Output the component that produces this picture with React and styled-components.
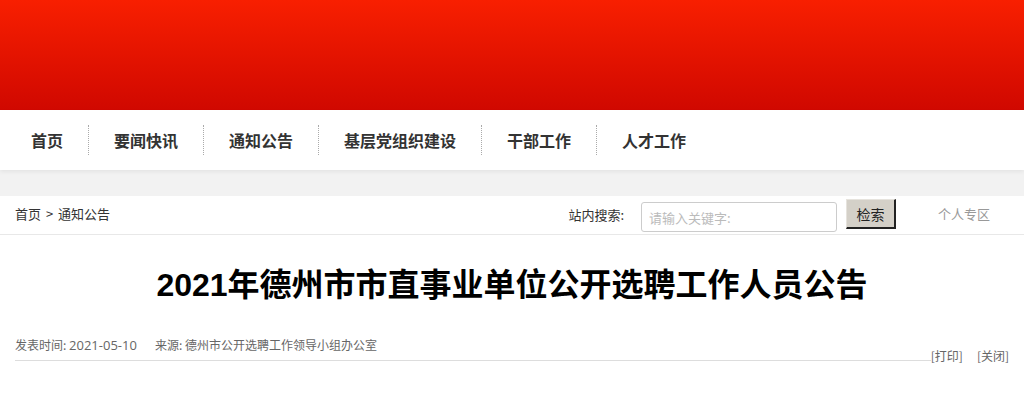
import React from "react";
import styled, { createGlobalStyle } from "styled-components";

const GlobalStyle = createGlobalStyle`
  body {
    margin: 0;
    background: #fff;
    font-family: "Noto Sans CJK SC", "Noto Sans", sans-serif;
    color: #333;
  }
`;

const navItems = ["首页", "要闻快讯", "通知公告", "基层党组织建设", "干部工作", "人才工作"];

const App = () => {
  return (
    <>
      <GlobalStyle />
      <Banner />
      <Nav>
        {navItems.map((item, i) => (
          <NavItem key={item} last={i === navItems.length - 1}>
            {item}
          </NavItem>
        ))}
      </Nav>
      <Band />
      <LocationBar>
        <Crumbs>首页 &gt; 通知公告</Crumbs>
        <Search>
          <SearchLabel>站内搜索:</SearchLabel>
          <SearchInput placeholder="请输入关键字:" />
          <SearchButton>检索</SearchButton>
        </Search>
        <Personal>个人专区</Personal>
      </LocationBar>
      <Article>
        <Title>2021年德州市市直事业单位公开选聘工作人员公告</Title>
        <MetaRow>
          <Meta>
            <span>
              发表时间: <Latin>2021-05-10</Latin>
            </span>
            <span>来源: 德州市公开选聘工作领导小组办公室</span>
          </Meta>
          <Tools>
            <span>[打印]</span>
            <span>[关闭]</span>
          </Tools>
        </MetaRow>
      </Article>
    </>
  );
};

export default App;

const Banner = styled.div`
  height: 110px;
  background: linear-gradient(to bottom, #f81f00, #d00800);
`;

const Nav = styled.ul`
  display: flex;
  align-items: center;
  height: 60px;
  margin: 0;
  padding: 0 0 0 6px;
  list-style: none;
  background: #fff;
  box-shadow: 0 2px 4px rgba(0, 0, 0, 0.06);
  position: relative;
`;

const NavItem = styled.li`
  padding: 0 25px;
  height: 30px;
  line-height: 30px;
  font-size: 16px;
  font-weight: bold;
  color: #333;
  border-right: ${(p) => (p.last ? "none" : "1px dotted #aaa")};
`;

const Band = styled.div`
  height: 26px;
  background: #f2f2f2;
`;

const LocationBar = styled.div`
  display: flex;
  align-items: center;
  height: 38px;
  padding: 0 15px;
  border-bottom: 1px solid #e8e8e8;
  font-size: 13px;
`;

const Crumbs = styled.div`
  flex: 1;
  color: #333;
  margin-top: -4px;
  word-spacing: 2px;
`;

const Search = styled.div`
  display: flex;
  align-items: center;
`;

const SearchLabel = styled.span`
  color: #333;
  margin-right: 17px;
  margin-top: -1px;
`;

const SearchInput = styled.input`
  box-sizing: border-box;
  width: 196px;
  height: 30px;
  margin-top: 4px;
  padding: 0 7px;
  border: 1px solid #ccc;
  border-radius: 3px;
  font-family: inherit;
  font-size: 13px;
  outline: none;

  &::placeholder {
    color: #bbb;
  }
`;

const SearchButton = styled.button`
  box-sizing: border-box;
  width: 50px;
  height: 30px;
  margin-left: 9px;
  margin-top: -2px;
  padding: 0;
  background: #d4d0c8;
  border-style: solid;
  border-width: 1px 2px 2px 1px;
  border-color: #e6e3dd #222 #222 #e6e3dd;
  font-family: inherit;
  font-size: 14px;
  color: #222;
`;

const Personal = styled.div`
  width: 52px;
  margin-left: 42px;
  margin-right: 19px;
  color: #999;
  margin-top: -4px;
`;

const Article = styled.div`
  padding: 0 15px 40px;
`;

const Title = styled.h1`
  margin: 30px 0 0;
  line-height: 40px;
  text-align: center;
  font-family: "Liberation Sans", "Noto Sans CJK SC", sans-serif;
  font-size: 32px;
  font-weight: bold;
  color: #000;
`;

const MetaRow = styled.div`
  display: flex;
  align-items: flex-end;
  margin-top: 30px;
  font-size: 12px;
  color: #666;
`;

const Meta = styled.div`
  flex: 1;
  display: flex;
  gap: 18px;
  line-height: 20px;
  padding-bottom: 5px;
  border-bottom: 1px solid #ddd;
`;

const Latin = styled.span`
  font-family: "Open Sans", "Noto Sans", sans-serif;
  font-size: 13px;
`;

const Tools = styled.div`
  display: flex;
  gap: 14px;
  line-height: 16px;
  margin-bottom: -3px;
`;
